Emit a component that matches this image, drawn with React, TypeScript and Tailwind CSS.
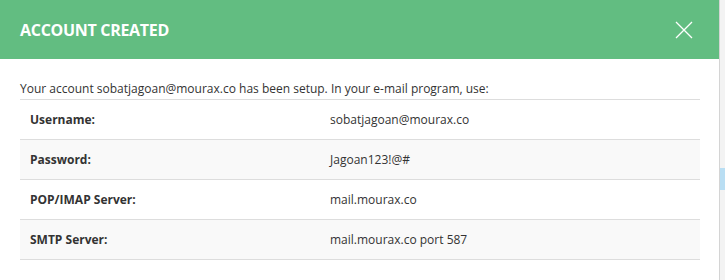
const rows = [
  { label: "Username:", value: "sobatjagoan@mourax.co" },
  { label: "Password:", value: "Jagoan123!@#" },
  { label: "POP/IMAP Server:", value: "mail.mourax.co" },
  { label: "SMTP Server:", value: "mail.mourax.co port 587" },
];

export default function App() {
  return (
    <div className="flex h-[280px] w-[725px] bg-[#f3f3f3] font-['Open_Sans',sans-serif]">
      <div className="h-full w-[720px] border-r border-[#d4d4d4] bg-white">
        {/* Header */}
        <div className="flex h-[59px] items-center justify-between bg-[#62bd81] pl-5 pr-[26px]">
          <h4 className="text-[16px] font-bold tracking-[-0.3px] text-white">ACCOUNT CREATED</h4>
          <svg width="18" height="18" viewBox="0 0 18 18" className="text-white">
            <path d="M1 1 L17 17 M17 1 L1 17" stroke="currentColor" strokeWidth="1.3" fill="none" />
          </svg>
        </div>

        {/* Body */}
        <div className="px-5 pt-[21px]">
          <p className="text-[12px] leading-[18px] text-[#333]">
            Your account sobatjagoan@mourax.co has been setup. In your e-mail program, use:
          </p>
          <table className="mt-[1px] w-[680px] border-collapse text-[12px] text-[#333]">
            <tbody>
              {rows.map((r, i) => (
                <tr key={r.label} className={i % 2 === 1 ? "bg-[#f9f9f9]" : "bg-white"}>
                  <td className="h-[40px] w-[300px] border-y border-[#dddddd] px-[10px] font-bold">{r.label}</td>
                  <td className="h-[40px] border-y border-[#dddddd] px-[10px]">{r.value}</td>
                </tr>
              ))}
            </tbody>
          </table>
        </div>
      </div>
      <div className="flex-1 pt-[168px]">
        <div className="h-[22px] w-full bg-[#b9def3]" />
      </div>
    </div>
  );
}
